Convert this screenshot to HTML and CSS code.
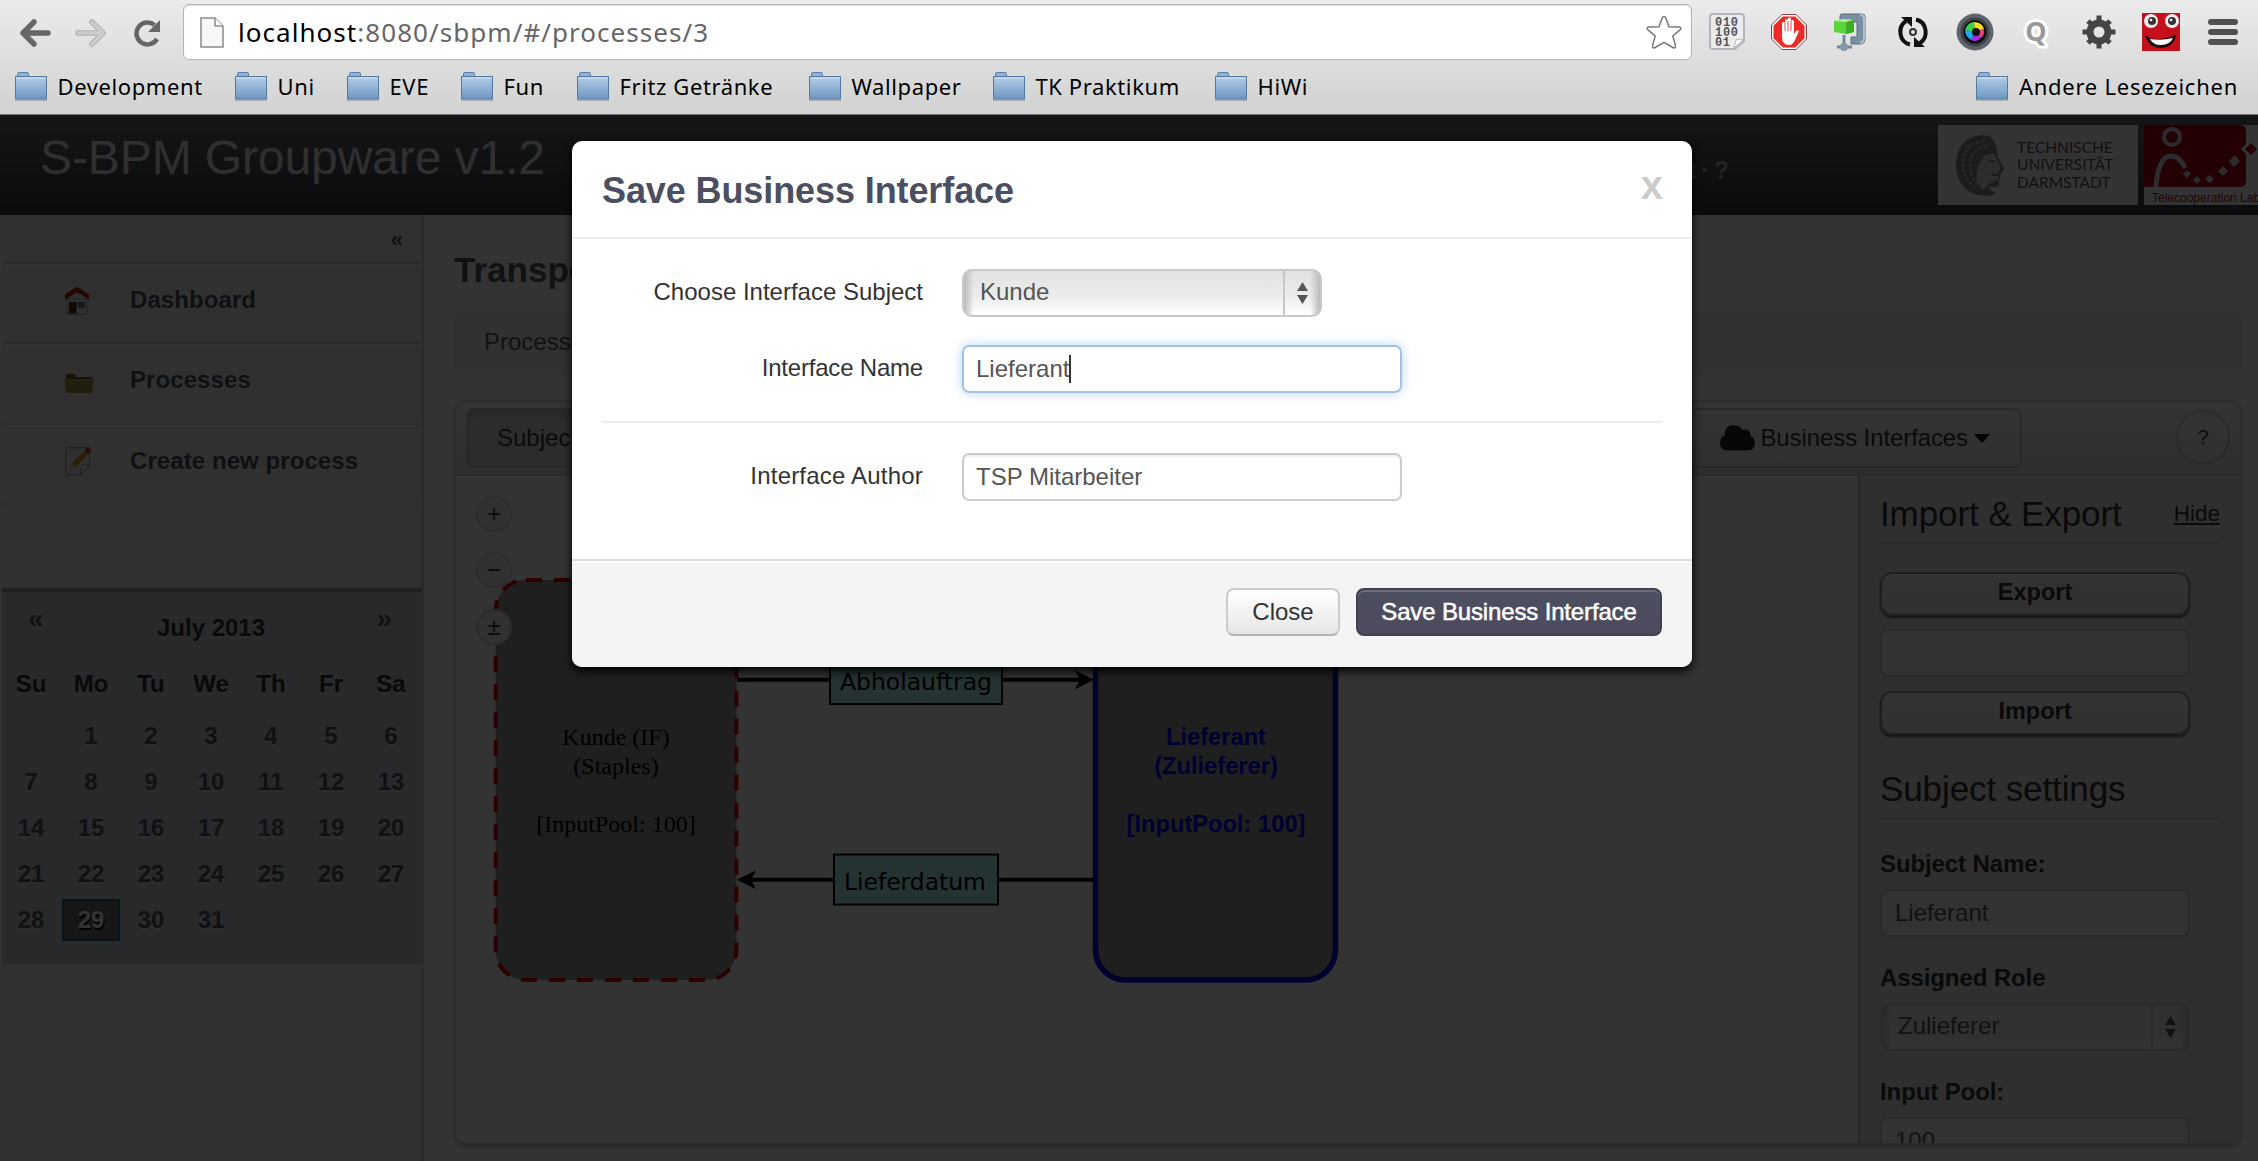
FILE: index.html
```html
<!DOCTYPE html>
<html lang="de">
<head>
<meta charset="utf-8">
<title>S-BPM Groupware</title>
<link rel="stylesheet" href="styles.css">
</head>
<body>
<svg width="0" height="0" class="defs" aria-hidden="true">
  <defs>
    <linearGradient id="folderFill" x1="0" y1="0" x2="0" y2="1"><stop offset="0" stop-color="#b4cde6"/><stop offset="1" stop-color="#6d96c2"/></linearGradient>
    <symbol id="folder" viewBox="0 0 32 29">
      <path d="M2.500 5V2q0-1.500 1.500-1.500h8q1.500 0 1.500 1.500v3" fill="#93b2d5" stroke="#5b7fa8"/>
      <rect x=".5" y="4.500" width="31" height="22.500" fill="url(#folderFill)" stroke="#56799f"/>
      <path d="M1.500 6h29" stroke="#d3e2f1"/><path d="M0 28h32" stroke="#9a9a9a" stroke-width="1.500"/>
    </symbol>
  </defs>
</svg>

<header class="chrome">
  <div class="toolbar">
    <div class="nav-buttons">
      <svg class="nav-icon" viewBox="0 0 32 28"><path d="M15 3L4 14l11 11M5 14h24" fill="none" stroke="#666" stroke-width="5.500" stroke-linecap="round" stroke-linejoin="round"/></svg>
      <svg class="nav-icon" viewBox="0 0 32 28"><path d="M17 3l11 11-11 11M27 14H3" fill="none" stroke="#b0b0b0" stroke-width="5.500" stroke-linecap="round" stroke-linejoin="round"/><path d="M17 3l11 11-11 11M27 14H3" fill="none" stroke="#cdcdcd" stroke-width="3.500" stroke-linecap="round" stroke-linejoin="round"/></svg>
      <svg class="nav-icon reload" viewBox="0 0 28 28"><path d="M24 20A11 11 0 1 1 21.500 6" fill="none" stroke="#666" stroke-width="4.500"/><path d="M27 1v12H15z" fill="#666"/></svg>
    </div>
    <div class="address">
      <svg class="page-icon" viewBox="0 0 24 31"><path d="M1 1h14l8 8v21H1z" fill="#f7f7f7" stroke="#8c8c8c" stroke-width="1.500"/><path d="M15 1v8h8" fill="#fff" stroke="#8c8c8c" stroke-width="1.500"/></svg>
      <span class="url"><b class="host">localhost</b>:8080/sbpm/#/processes/3</span>
      <svg class="star" viewBox="0 0 36 34"><path d="M18 1.500q1.500 0 2 2l3 8.200 10 .4q3.500.6.800 3l-7 5.900 2.600 9.500q.3 3.500-2.600 2L18 27.300l-8.800 5.200q-2.900 1.500-2.600-2l2.600-9.500-7-5.900q-2.700-2.400.8-3l10-.4 3-8.200q.5-2 2-2z" fill="#fff" stroke="#777" stroke-width="1.500"/></svg>
    </div>
    <div class="extensions">
      <svg viewBox="0 0 38 38"><path d="M5 1h28q3 0 3 3v24l-9 8H5q-3 0-3-3V4q0-3 3-3z" fill="#ececec" stroke="#b0b6bc" stroke-width="2"/><path d="M35 27q-7-1-7 0l-2 8z" fill="#fff" stroke="#b3b8bd"/><g class="bits"><text x="7" y="13" textLength="23">010</text><text x="7" y="23" textLength="23">100</text><text x="7" y="33" textLength="15">01</text></g></svg>
      <svg viewBox="0 0 38 38"><path d="M12 1.500h14L36.500 12v14L26 36.500H12L1.500 26V12z" fill="#fff" stroke="#844"/><path d="M12.800 3.500h12.400L34.500 12.800v12.400l-9.300 9.300H12.800L3.500 25.200V12.800z" fill="#ee2a26"/><path d="M12 20V10q1.500-2 3 0v-3q1.500-2 3 0V5.500q1.500-2 3 0V8q1.500-2 3 0v13l2-3q2-1.500 3 0l-4 9q-2 5-6 5-7 0-7-8z" fill="#fff"/><path d="M15 10v8M18 8v10M21 8v10" stroke="#e3211c" stroke-width=".8"/></svg>
      <svg viewBox="0 0 38 38"><path d="M10 1h20q3 0 3 3v22q0 5-5 5h-9v-7h6V9H8V3q0-2 2-2z" fill="#7b8fa2" stroke="#5a6d80"/><path d="M28 2q4 0 4 3v20q0 4-4 5" stroke="#b4c1cd" fill="none" stroke-width="2"/><path d="M2 8l9-2 11 1v12l-8 2-12-2z" fill="#5ad43c"/><path d="M2 8l9-2 11 1-8 2z" fill="#b5f29a"/><path d="M14 9l8-2v12l-8 2z" fill="#3dab25"/><path d="M12 22v15M5 34h15" stroke="#70899e" stroke-width="3"/><circle cx="12" cy="34" r="4" fill="#8499ab"/></svg>
      <svg viewBox="0 0 38 38"><g fill="none" stroke="#111" stroke-width="4"><path d="M16 31.500C5 29 3 14 12 8"/><path d="M22 6.500C33 9 35 24 26 30"/></g><path d="M7 4h11v10zM31 34H20V24z" fill="#111"/><circle cx="19" cy="19" r="3" fill="none" stroke="#333" stroke-width="2"/></svg>
      <svg viewBox="0 0 38 38"><circle cx="19" cy="19" r="18.500" fill="#5f646b"/><circle cx="19" cy="19" r="14.500" fill="#3e4349"/><circle cx="19" cy="19" r="11.500" fill="#0a0a0a"/><path d="M19 19L9 17q3-8 9-8z" fill="#37d34c"/><path d="M19 19l-1-10q8 0 10 7z" fill="#f2e01f"/><path d="M19 19l9-3q1 6-3 9z" fill="#f03a7e"/><path d="M19 19l6 6q-5 5-10 2z" fill="#a02fe0"/><path d="M19 19l-4 8q-6-4-6-10z" fill="#1fa9ee"/><circle cx="20" cy="19" r="4" fill="#101010"/></svg>
      <svg viewBox="0 0 38 38"><text class="q-badge" x="18" y="28" text-anchor="middle">Q</text></svg>
      <svg viewBox="0 0 38 38"><circle cx="19" cy="19" r="9" fill="none" stroke="#444" stroke-width="7"/><path d="M19 2.500v6M19 29.500v6M2.500 19h6M29.500 19h6M8 8l4 4M26 26l4 4M30 8l-4 4M12 26l-4 4" stroke="#444" stroke-width="5"/></svg>
      <svg viewBox="0 0 38 38"><path d="M0 0h38v38H0z" fill="#c4101c"/><circle cx="9" cy="8" r="7" fill="#f4eeee"/><circle cx="30" cy="8" r="7" fill="#f4eeee"/><circle cx="10" cy="8" r="4" fill="#333"/><circle cx="30" cy="8" r="4" fill="#333"/><circle cx="9" cy="7" r="1.300" fill="#fff"/><circle cx="29" cy="7" r="1.300" fill="#fff"/><path d="M3 23q2-1 4 2 12 3 24-2 2-3 3 0-3 12-16 12Q7 35 3 23z" fill="#1c0c0c"/><path d="M8 26q12 2 23-1-3 7-12 7-8 0-11-6z" fill="#fff"/></svg>
      <svg viewBox="0 0 38 38"><g fill="#505050"><rect x="4" y="6" width="30" height="6" rx="3"/><rect x="4" y="16" width="30" height="6" rx="3"/><rect x="4" y="26" width="30" height="6" rx="3"/></g></svg>
    </div>
  </div>
  <div class="bookmarks">
    <div class="bookmark-list">
      <span class="bookmark"><svg class="folder"><use href="#folder"/></svg>Development</span>
      <span class="bookmark"><svg class="folder"><use href="#folder"/></svg>Uni</span>
      <span class="bookmark"><svg class="folder"><use href="#folder"/></svg>EVE</span>
      <span class="bookmark"><svg class="folder"><use href="#folder"/></svg>Fun</span>
      <span class="bookmark"><svg class="folder"><use href="#folder"/></svg>Fritz Getränke</span>
      <span class="bookmark"><svg class="folder"><use href="#folder"/></svg>Wallpaper</span>
      <span class="bookmark"><svg class="folder"><use href="#folder"/></svg>TK Praktikum</span>
      <span class="bookmark"><svg class="folder"><use href="#folder"/></svg>HiWi</span>
    </div>
    <span class="bookmark other"><svg class="folder"><use href="#folder"/></svg>Andere Lesezeichen</span>
  </div>
</header>

<div class="app">
  <div class="app-header">
    <h1>S-BPM Groupware v1.2</h1>
    <nav class="user-nav">Logout · ?</nav>
    <div class="logos">
      <div class="logo-tu">
        <svg class="athena" viewBox="0 0 52 62"><path d="M35 2C15-2 2 12 2 30c0 16 8 28 22 31 5 1 14 1 18-1l-8-7c8 1 12 0 11-5l1-5 1-4 3-4-6-12C42 12 41 5 35 2z" fill="#8c8c8c"/><path d="M30 22q8-4 11-1l6 13-3 3 1 9-9 3-7 7-6-8q-2-16 7-26z" fill="#dadada"/><path d="M35 27h6M37 41h7" stroke="#777" stroke-width="2"/><g fill="none" stroke="#d8d8d8" stroke-width="2" stroke-dasharray="3 2"><path d="M30 7C13 8 8 20 9 32s8 20 14 23"/><path d="M32 13C19 15 15 24 16 33s4 14 8 18"/></g></svg>
        <div class="tu-name">TECHNISCHE<br>UNIVERSITÄT<br>DARMSTADT</div>
      </div>
      <div class="logo-tk">
        <svg class="tk-mark" viewBox="0 0 114 62"><path d="M0 0h96q6 0 6 6v50q0 6-6 6H0z" fill="#a80418"/><circle cx="28" cy="12" r="8" fill="none" stroke="#ddd" stroke-width="4"/><path d="M12 62c1-18 6-31 15-31 7 0 11 5 14 12" fill="none" stroke="#ddd" stroke-width="5"/><g fill="#ddd"><path d="M39 49l4-4 4 4-4 4zM49 55l4-4 4 4-4 4zM61 54l5-4 4 4-4 4zM74 46l5-5 5 5-5 5zM85 36l6-6 5 6-6 6z"/></g><path d="M99 24l8-8 8 8-8 8z" fill="#a80418" stroke="#fff" stroke-width="3"/></svg>
        <div class="tk-name">Telecooperation Lab</div>
      </div>
    </div>
  </div>

  <div class="app-body">
    <aside class="sidebar">
      <div class="collapse">«</div>
      <ul class="menu">
        <li><svg class="menu-icon" viewBox="0 0 28 30"><path d="M3 13h21v16H3z" fill="#e8e8e8" stroke="#aaa"/><path d="M1 14V8L13.500 0 26 8v6L13.500 6z" fill="#b82620"/><path d="M5 16h8v12H5z" fill="#5a300e"/><path d="M14.500 16h7v6h-7z" fill="#5c7b98"/></svg>Dashboard</li>
        <li><svg class="menu-icon wide" viewBox="0 0 30 30"><path d="M2 8h9l1 3h16v8H2z" fill="#6d6122"/><path d="M0 13h30l-2 14H2z" fill="#a8984e"/><path d="M1 14h28" stroke="#c8ba78"/></svg>Processes</li>
        <li><svg class="menu-icon wide" viewBox="0 0 30 32"><path d="M1 2h25v18l-10 11H1z" fill="#f0f0f0" stroke="#888"/><path d="M26 20h-8l-2 11z" fill="#fff" stroke="#888"/><path d="M4 26l3-8L23 3l4 4-16 16z" fill="#cf9f1f"/><path d="M4 26l3-8 4 5z" fill="#f0d8a8"/><path d="M21 5l3-4q3 0 4 4l-3 4z" fill="#c03c3c"/></svg>Create new process</li>
      </ul>
      <div class="calendar">
        <div class="cal-head"><span class="prev">«</span><span class="month">July 2013</span><span class="next">»</span></div>
        <div class="cal-grid cal-days"><span>Su</span><span>Mo</span><span>Tu</span><span>We</span><span>Th</span><span>Fr</span><span>Sa</span></div>
        <div class="cal-grid cal-dates"><span></span><span>1</span><span>2</span><span>3</span><span>4</span><span>5</span><span>6</span>
          <span>7</span><span>8</span><span>9</span><span>10</span><span>11</span><span>12</span><span>13</span>
          <span>14</span><span>15</span><span>16</span><span>17</span><span>18</span><span>19</span><span>20</span>
          <span>21</span><span>22</span><span>23</span><span>24</span><span>25</span><span>26</span><span>27</span>
          <span>28</span><span class="today">29</span><span>30</span><span>31</span></div>
      </div>
    </aside>

    <main class="content">
      <h2>Transportauftrag</h2>
      <div class="breadcrumb">Processes</div>
      <section class="editor">
        <div class="editor-bar">
          <div class="tabs">
            <span class="tab active">Subject Interaction</span>
            <span class="tab interfaces"><svg class="cloud" viewBox="0 0 35 26"><path d="M8 25.500q-8 0-8-8 0-5 4.500-7Q4 1 13 0q7 0 9 5 6-2 8 2 1 2 .3 4Q35 13 35 18q0 7.500-8 7.500z" fill="#262626"/></svg>Business Interfaces<i class="caret"></i></span>
          </div>
          <span class="help">?</span>
        </div>
        <div class="editor-main">
          <div class="canvas">
            <svg class="diagram" viewBox="0 0 1402 668">
              <path d="M70 104H250.400A30 30 0 0 1 280.400 134V474A30 30 0 0 1 250.400 504H69.700A30 30 0 0 1 39.700 474V134A30 30 0 0 1 69.700 104Z" fill="#9b9b9b" stroke="#d80000" stroke-width="4" stroke-dasharray="16 12"/>
              <rect x="639.500" y="104" width="240" height="400" rx="30" fill="#9b9b9b" stroke="#0000e6" stroke-width="5.500"/>
              <g class="kunde" text-anchor="middle"><text x="160" y="269">Kunde (IF)</text><text x="160" y="298">(Staples)</text><text x="160" y="355.500">[InputPool: 100]</text></g>
              <g class="lieferant" text-anchor="middle"><text x="760" y="269">Lieferant</text><text x="760" y="298">(Zulieferer)</text><text x="760" y="355.500">[InputPool: 100]</text></g>
              <path d="M281 203.700H628M637 403.800H290" stroke="#000" stroke-width="4"/>
              <path d="M638 203.700l-19-9.500 5 9.500-5 9.500zM281 403.800l19-9.500-5 9.500 5 9.500z"/>
              <rect x="374" y="178" width="172" height="50" fill="#b4fafa" stroke="#000" stroke-width="2"/>
              <rect x="378" y="378.500" width="164" height="50" fill="#b4fafa" stroke="#000" stroke-width="2"/>
              <g class="message"><text x="384" y="213.500" textLength="152">Abholauftrag</text><text x="388" y="413.500" textLength="142">Lieferdatum</text></g>
            </svg>
            <div class="zoomers"><span>+</span><span>−</span><span>±</span></div>
          </div>
          <aside class="props">
            <div class="props-title"><h3>Import &amp; Export</h3><span class="hide">Hide</span></div>
            <div class="big-btn export">Export</div>
            <div class="field file"></div>
            <div class="big-btn import">Import</div>
            <div class="props-title second"><h3>Subject settings</h3></div>
            <div class="prop-label first">Subject Name:</div>
            <div class="field">Lieferant</div>
            <div class="prop-label">Assigned Role</div>
            <div class="select small"><span>Zulieferer</span><svg class="updown" viewBox="0 0 11 22"><path d="M0 9l5.500-9L11 9zM0 13l5.500 9 5.500-9z" fill="#555"/></svg></div>
            <div class="prop-label">Input Pool:</div>
            <div class="field">100</div>
          </aside>
        </div>
      </section>
    </main>
  </div>

  <div class="backdrop">
    <div class="modal">
      <div class="modal-header"><h4>Save Business Interface</h4><span class="close">x</span></div>
      <div class="modal-body">
        <div class="row"><label>Choose Interface Subject</label><div class="select"><span>Kunde</span><svg class="updown" viewBox="0 0 11 22"><path d="M0 9l5.500-9L11 9zM0 13l5.500 9 5.500-9z" fill="#555"/></svg></div></div>
        <div class="row name-row"><label>Interface Name</label><div class="input focus">Lieferant<i class="cursor"></i></div></div>
        <hr>
        <div class="row author-row"><label>Interface Author</label><div class="input">TSP Mitarbeiter</div></div>
      </div>
      <div class="modal-footer"><span class="btn">Close</span><span class="btn primary">Save Business Interface</span></div>
    </div>
  </div>
</div>
</body>
</html>
```
FILE: styles.css
```css
* { box-sizing: border-box; }
html { height: 1161px; overflow: hidden; }
body { margin: 0; width: 2258px; height: 1161px; overflow: hidden; font: 24px "Liberation Sans", Arial, sans-serif; color: #333; }
h1, h2, h3, h4, ul { margin: 0; padding: 0; font-weight: normal; list-style: none; }
.defs { display: block; }

/* browser chrome */
.chrome { height: 115px; background: linear-gradient(#ebebeb, #d2d2d2); border-bottom: 1px solid #777; font-family: "Noto Sans", sans-serif; color: #000; }
.toolbar { display: flex; align-items: flex-start; padding-top: 4px; height: 62px; }
.nav-buttons { display: flex; gap: 24px; width: 183px; padding: 15px 0 0 19px; }
.nav-icon { width: 32px; height: 28px; }
.reload { width: 28px; margin-left: 2px; }
.address { display: flex; align-items: center; width: 1509px; height: 56px; padding: 0 9px 0 16px; background: #fff; border: 1px solid #b4b4b4; border-radius: 6px; box-shadow: inset 0 1px 1px #ddd; }
.page-icon { width: 24px; height: 31px; }
.url { flex: 1; margin-left: 14px; font-size: 26px; line-height: 52px; letter-spacing: 1.050px; color: #666; }
.host { font-weight: normal; color: #000; }
.star { width: 36px; height: 34px; }
.extensions { display: grid; grid-template-columns: repeat(9, 62px); justify-items: center; padding: 9px 0 0 4px; }
.extensions svg { width: 38px; height: 38px; }
.bits { font: bold 12px "Liberation Mono", monospace; fill: #555; }
.q-badge { font: bold 27px "Noto Sans", sans-serif; fill: #999; stroke: #fff; stroke-width: 6px; paint-order: stroke; stroke-linejoin: round; }
.bookmarks { display: flex; justify-content: space-between; height: 52px; padding: 0 20px 0 15px; font-size: 22px; letter-spacing: .6px; }
.bookmark-list { display: grid; grid-template-columns: 220px 112px 114px 116px 232px 184px 222px 200px; }
.bookmark { display: flex; align-items: center; gap: 10.500px; height: 48px; white-space: nowrap; }
.other { letter-spacing: .75px; }
.folder { width: 32px; height: 29px; }

/* application shell */
.app { position: relative; height: 1046px; background: #fff; overflow: hidden; }
.app-header { display: flex; height: 100px; background: linear-gradient(#616b75, #353a42); }
h1 { padding-left: 40px; font-size: 48px; line-height: 86px; letter-spacing: -.1px; color: #e8e8e8; }
.user-nav { margin: 0 209px 0 auto; line-height: 110px; font-weight: bold; word-spacing: -1.500px; color: #b4b9c0; }
.logos { display: flex; gap: 6px; width: 320px; padding-top: 10px; }
.logo-tu { display: flex; flex: none; align-items: center; width: 200px; height: 80px; padding-left: 16px; background: #fff; }
.athena { width: 52px; height: 62px; }
.tu-name { margin-left: 11px; font: 15.500px/17.300px Lato, sans-serif; color: #555; }
.logo-tk { flex: none; width: 114px; height: 80px; overflow: hidden; background: #fff; }
.tk-mark { display: block; width: 114px; height: 62px; }
.tk-name { padding-left: 8px; font-size: 12px; line-height: 22px; white-space: nowrap; color: #a01020; }
.app-body { display: flex; height: 946px; }

/* left column */
.sidebar { width: 424px; background: #efefef; border-left: 2px solid #fafafa; border-right: 2px solid #d2d2d2; }
.collapse { height: 49px; padding-right: 19px; line-height: 49px; text-align: right; font-size: 22px; font-weight: bold; color: #4a525c; border-bottom: 2px solid #d2d2d2; }
.menu li { display: flex; align-items: center; height: 80.300px; padding: 0 0 8px 62px; border-top: 2px solid #fafafa; border-bottom: 2px solid #d2d2d2; font-weight: bold; letter-spacing: .08px; color: #4a525c; text-shadow: 0 1px 0 #fff; }
.menu-icon { width: 27px; height: 30px; margin: 1px 39px 0 0; }
.menu-icon.wide { width: 30px; margin-right: 36px; }
.calendar { height: 376px; margin-top: 83px; background: #c3cad1; border-top: 4px solid #a0a0a0; font-weight: bold; color: #4b5564; text-shadow: 0 2px 0 #dde1e5; }
.cal-head { display: flex; justify-content: space-between; height: 66px; padding: 17px 30px 0 26px; }
.month { line-height: 38px; padding-left: 2px; }
.month, .cal-days { color: #2d2d2d; }
.prev, .next { line-height: 20px; font-size: 28px; }
.cal-grid { display: grid; grid-template-columns: repeat(7, 60px); grid-auto-rows: 46px; text-align: center; }
.cal-grid span { height: 42px; margin-right: 2px; }
.cal-days { height: 55px; line-height: 52px; }
.cal-dates { margin-top: 2px; line-height: 41px; }
.today { background: #6e6e6e; border: 2px solid #28648c; line-height: 37px; color: #fff; text-shadow: 1px 2px 0 #000; }

/* editor */
.content { flex: 1; padding: 43px 16px 0 30px; }
h2 { height: 54px; font-size: 35px; font-weight: bold; line-height: 24px; color: #505a64; }
.breadcrumb { height: 60px; margin-bottom: 28px; padding-left: 30px; line-height: 60px; background: #f3f3f3; border-radius: 8px; color: #505a64; }
.editor { height: 745px; border: 2px solid #d6d6d6; border-radius: 12px; overflow: hidden; box-shadow: 0 2px 3px #bbb; }
.editor-bar { display: flex; justify-content: space-between; align-items: flex-start; height: 74px; padding: 6px 10px 0; background: linear-gradient(#fff, #e6e6e6); border-bottom: 2px solid #d0d0d0; }
.tabs { display: flex; justify-content: space-between; width: 1556px; height: 60px; border: 2px solid #c8c8c8; border-radius: 8px; background: linear-gradient(#fdfdfd, #ebebeb); line-height: 56px; }
.tab.active { padding: 0 29px; background: #dcdcdc; box-shadow: inset 0 4px 8px #bbb; border-radius: 6px; }
.interfaces { display: flex; align-items: center; padding-right: 30px; letter-spacing: -.1px; }
.cloud { width: 35px; height: 26px; margin-right: 5px; }
.caret { margin-left: 6px; border: 8px solid transparent; border-top: 9px solid #000; border-bottom: 0; }
.help { width: 54px; height: 54px; margin-top: 2px; border: 2px solid #cfcfcf; border-radius: 50%; text-align: center; line-height: 50px; font-size: 20px; background: linear-gradient(#fff, #ededed); }
.editor-main { display: flex; height: 667px; }
.canvas { position: relative; flex: 1; }
.diagram { position: absolute; left: 0; top: 0; width: 1402px; height: 668px; }
.kunde { font: 24px "Liberation Serif", serif; }
.lieferant { font-size: 23.700px; font-weight: bold; fill: #0000f0; }
.message { font: 23.500px "DejaVu Sans", sans-serif; }
.zoomers { position: relative; display: flex; flex-direction: column; gap: 20.300px; padding: 20px 0 0 20px; }
.zoomers span { width: 36px; height: 36px; border: 2px solid #d8d8d8; border-radius: 50%; background: #f2f2f2; text-align: center; line-height: 32px; }
.props { width: 382px; padding: 9px 20px 0; background: #e8e8e8; border-left: 2px solid #bebebe; }
.props-title { display: flex; justify-content: space-between; margin-bottom: 28px; border-bottom: 2px solid #d0d0d0; }
.props-title.second { margin: 25px 0 0; }
h3 { font-size: 35px; line-height: 57px; letter-spacing: -.1px; }
.hide { font-size: 22.500px; line-height: 57px; text-decoration: underline; text-decoration-thickness: 2px; text-underline-offset: 2px; }
.big-btn { width: 310px; height: 44px; border: 2px solid #999; border-radius: 12px; background: linear-gradient(#fdfdfd, #eee); box-shadow: 0 2px 2px #666; text-align: center; font-size: 23.500px; font-weight: bold; line-height: 37px; }
.field { width: 310px; height: 47.500px; padding-left: 13px; border: 2px solid #d0d0d0; border-radius: 8px; background: #fbfbfb; line-height: 43px; color: #555; }
.file { margin: 13px 0 14.500px; }
.prop-label { margin: 21.700px 0 5px; line-height: 40px; height: 40px; font-weight: bold; letter-spacing: -.1px; }
.prop-label.first { margin-top: 25px; }
.select { display: flex; width: 360px; height: 48px; border: 2px solid #c8c8c8; border-radius: 10px; background: linear-gradient(90deg, #bbb, #bbb0 10px calc(100% - 10px), #bbb), linear-gradient(#e2e2e2, #ebebeb 55%, #fff); color: #555; }
.select span { flex: 1; padding-left: 16px; line-height: 41px; }
.updown { width: 37px; height: 44px; padding: 11px 12px; border-left: 2px solid #c8c8c8; }
.select.small { width: 310px; height: 47.500px; border-color: #d0d0d0; background: linear-gradient(90deg, #ccc, #ccc0 10px calc(100% - 10px), #ccc), linear-gradient(#efefef, #f2f2f2 55%, #fcfcfc); }
.select.small .updown { border-color: #ccc; }

/* dialog */
.backdrop { position: absolute; inset: 0; display: flex; justify-content: center; align-items: flex-start; padding: 26px 0 0 6px; background: rgba(0, 0, 0, .8); }
.modal { width: 1120px; height: 526px; background: #fff; border-radius: 10px; box-shadow: 0 4px 10px #000; overflow: hidden; }
.modal-header { display: flex; justify-content: space-between; height: 98px; padding: 0 29px 0 30px; border-bottom: 2px solid #eee; }
h4 { font-size: 36px; font-weight: bold; line-height: 99px; letter-spacing: -.1px; color: #4b4f5f; }
.close { font-size: 40px; font-weight: bold; line-height: 88px; color: #ccc; }
.modal-body { height: 320px; padding: 30px 30px 0; }
.row { display: flex; gap: 39px; height: 76px; }
.row label { width: 321px; text-align: right; line-height: 46px; }
.name-row label { letter-spacing: -.2px; }
.author-row label { letter-spacing: .2px; }
.input { display: flex; align-items: center; width: 440px; height: 48px; padding-left: 12px; border: 2px solid #ccc; border-radius: 7px; box-shadow: inset 0 2px 2px #eee; color: #555; line-height: 44px; }
.focus { border-color: #a3c1e4; box-shadow: 0 0 12px #b9d3f1; }
.cursor { width: 2px; height: 28px; background: #333; }
hr { height: 2px; margin: 0 0 30px; border: 0; background: #eee; }
.modal-footer { display: flex; justify-content: flex-end; gap: 16px; height: 108px; padding: 27px 30px 0; background: #f4f4f4; border-top: 2px solid #ddd; box-shadow: inset 0 2px #fff; }
.btn { width: 114px; height: 48px; border: 2px solid #ccc; border-bottom-color: #b3b3b3; border-radius: 8px; background: linear-gradient(#fff, #e6e6e6); text-align: center; line-height: 43px; }
.btn.primary { width: 306px; border-color: #43414f; background: linear-gradient(#4b5060, #4e4a5e); box-shadow: inset 0 2px #6a6d7a; color: #fff; letter-spacing: -.15px; -webkit-text-stroke: .5px #fff; }
```
